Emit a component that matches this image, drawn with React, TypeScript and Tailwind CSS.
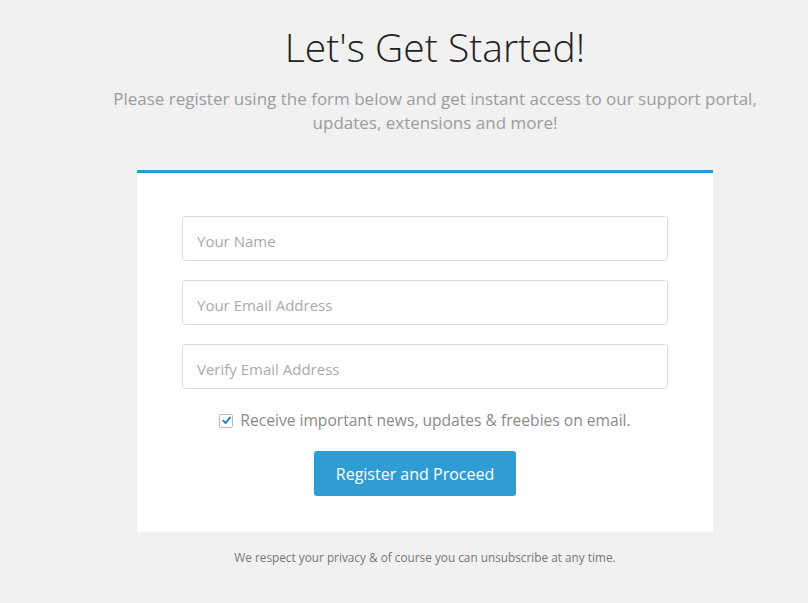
import React from "react";

export default function App() {
  return (
    <div className="min-h-[603px] w-full bg-[#f1f1f1] font-['Open_Sans',sans-serif]">
      <div className="ml-[95px] w-[680px] pt-[21px] text-center">
        <h1 className="text-[39px] font-light leading-[52px] text-[#222]">Let's Get Started!</h1>
        <p className="mt-[14px] text-[17px] leading-[24px] text-[#9c9c9c]">
          Please register using the form below and get instant access to our support portal, updates, extensions and more!
        </p>
      </div>
      <div className="ml-[137px] mt-[35px] w-[576px]">
        <div className="border-t-[3px] border-[#3399cc] bg-white px-[45px] pt-[43px] pb-[36px]">
          <div className="flex flex-col gap-[19px]">
            {["Your Name", "Your Email Address", "Verify Email Address"].map((p) => (
              <input
                key={p}
                placeholder={p}
                className="h-[45px] w-full rounded-[3px] border border-[#ddd] px-[14px] pt-[4px] text-[15px] text-[#555] outline-none placeholder:text-[#aaa]"
              />
            ))}
          </div>
          <label className="mt-[20px] flex items-center justify-center gap-[7px] text-[15.6px] text-[#8a8a8a]">
            <span className="flex h-[14px] w-[14px] items-center justify-center rounded-[2px] border border-[#bbb] bg-white">
              <svg viewBox="0 0 12 12" className="h-[11px] w-[11px]">
                <path d="M2.5 6.2 L5 8.8 L9.8 2.8" fill="none" stroke="#1f7fc4" strokeWidth="2" strokeLinecap="round" strokeLinejoin="round" />
              </svg>
            </span>
            Receive important news, updates &amp; freebies on email.
          </label>
          <div className="mt-[19px] flex">
            <button className="ml-[132px] h-[45px] w-[202px] rounded-[3px] bg-[#2f9dd4] text-[16px] text-white">
              Register and Proceed
            </button>
          </div>
        </div>
        <p className="mt-[17px] text-center text-[11.8px] text-[#777]">
          We respect your privacy &amp; of course you can unsubscribe at any time.
        </p>
      </div>
    </div>
  );
}
